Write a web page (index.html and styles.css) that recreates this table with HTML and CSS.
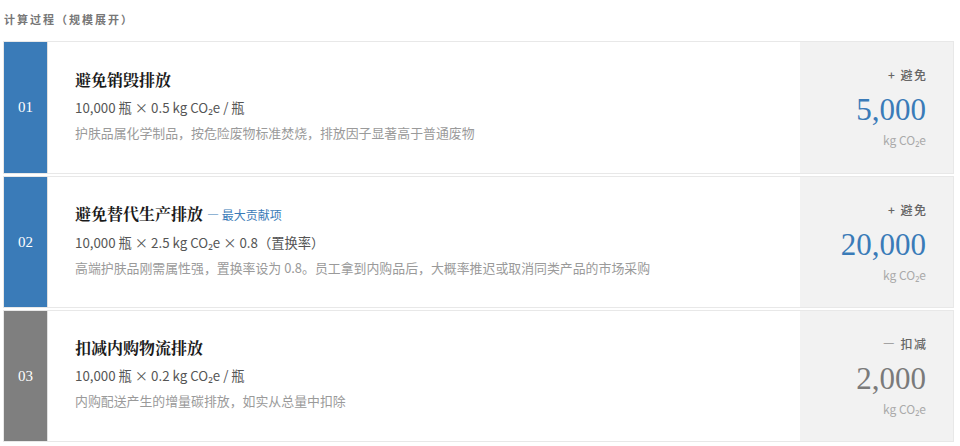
FILE: index.html
```html
<!DOCTYPE html>
<html lang="zh">
<head>
<meta charset="utf-8">
<link rel="stylesheet" href="styles.css">
</head>
<body>
<div class="wrap">
  <div class="heading">计算过程（规模展开）</div>
  <div class="list">
    <div class="card">
      <div class="idx blue">01</div>
      <div class="main">
        <div class="title">避免销毁排放</div>
        <div class="formula">10,000 瓶 × 0.5 kg CO₂e / 瓶</div>
        <div class="desc">护肤品属化学制品，按危险废物标准焚烧，排放因子显著高于普通废物</div>
      </div>
      <div class="side">
        <div class="tag">+ 避免</div>
        <div class="num blue-t">5,000</div>
        <div class="unit">kg CO₂e</div>
      </div>
    </div>
    <div class="card">
      <div class="idx blue">02</div>
      <div class="main">
        <div class="title">避免替代生产排放 <span class="note">— 最大贡献项</span></div>
        <div class="formula">10,000 瓶 × 2.5 kg CO₂e × 0.8（置换率）</div>
        <div class="desc">高端护肤品刚需属性强，置换率设为 0.8。员工拿到内购品后，大概率推迟或取消同类产品的市场采购</div>
      </div>
      <div class="side">
        <div class="tag">+ 避免</div>
        <div class="num blue-t">20,000</div>
        <div class="unit">kg CO₂e</div>
      </div>
    </div>
    <div class="card">
      <div class="idx gray">03</div>
      <div class="main">
        <div class="title">扣减内购物流排放</div>
        <div class="formula">10,000 瓶 × 0.2 kg CO₂e / 瓶</div>
        <div class="desc">内购配送产生的增量碳排放，如实从总量中扣除</div>
      </div>
      <div class="side">
        <div class="tag">— 扣减</div>
        <div class="num gray-t">2,000</div>
        <div class="unit">kg CO₂e</div>
      </div>
    </div>
  </div>
</div>
</body>
</html>
```
FILE: styles.css
```css
* { box-sizing: border-box; }
html, body { margin: 0; padding: 0; background: #fff; }
body {
  font-family: "Noto Sans CJK SC", "Noto Sans", sans-serif;
  color: #333;
}
.wrap {
  width: 951px;
  margin-left: 3px;
  padding-top: 11px;
}
.heading {
  font-size: 11px;
  line-height: 16px;
  letter-spacing: 2px;
  color: #777;
  font-weight: 700;
  padding-left: 1px;
  margin-bottom: 14px;
}
.list {
  display: flex;
  flex-direction: column;
  gap: 2px;
}
.card {
  display: grid;
  grid-template-columns: 44px 1fr 153px;
  height: 133px;
  border: 1px solid #e8e8e8;
  background: #fff;
}
.card + .card { height: 132px; }
.idx {
  display: flex;
  align-items: center;
  justify-content: center;
  color: #fff;
  font-family: "Liberation Serif", "DejaVu Serif", serif;
  font-size: 15px;
  border-right: 1px solid #e0e0e0;
}
.idx.blue { background: #3a7bb8; }
.idx.gray { background: #7f7f7f; }
.main {
  display: flex;
  flex-direction: column;
  justify-content: center;
  padding-left: 27px;
  padding-bottom: 4px;
}
.title {
  font-family: "Noto Serif CJK SC", "Noto Sans CJK SC", serif;
  font-weight: 700;
  font-size: 16px;
  line-height: 22px;
  color: #1a1a1a;
  margin-bottom: 7px;
}
.note {
  font-family: "Noto Sans CJK SC", sans-serif;
  font-weight: 400;
  font-size: 12px;
  color: #3a7bb8;
}
.formula {
  font-size: 13.3px;
  line-height: 20px;
  color: #555;
  margin-bottom: 5px;
}
.desc {
  font-size: 12.9px;
  line-height: 20px;
  color: #9a9a9a;
}
.side {
  background: #f2f2f2;
  display: flex;
  flex-direction: column;
  align-items: flex-end;
  justify-content: center;
  padding-right: 27px;
}
.tag {
  font-size: 12px;
  line-height: 16px;
  color: #666;
  font-weight: 500;
  letter-spacing: 1.5px;
  margin-right: -1.5px;
  margin-bottom: 6px;
}
.num {
  font-family: "Liberation Serif", "DejaVu Serif", serif;
  font-size: 31px;
  line-height: 36px;
  margin-top: 3px;
}
.blue-t { color: #3a7bb8; }
.gray-t { color: #7a7a7a; }
.unit {
  font-size: 12px;
  line-height: 16px;
  color: #aaa;
  margin-top: 4px;
}
```
